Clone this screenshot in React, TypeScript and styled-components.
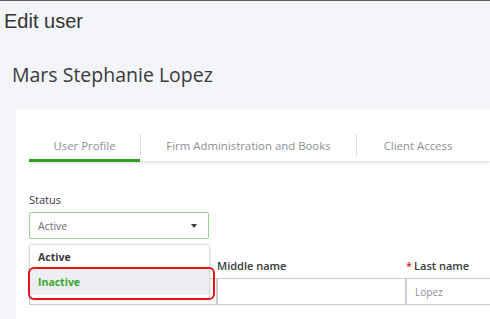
import React from 'react';
import styled, { createGlobalStyle } from 'styled-components';

const GlobalStyle = createGlobalStyle`
  html, body {
    margin: 0;
    padding: 0;
    background: #f4f5f8;
    overflow: hidden;
  }
  body {
    border-top: 1px solid #5a5a5a;
    font-family: "Open Sans", "Noto Sans", sans-serif;
    color: #393a3d;
  }
`;

const Page = styled.div`
  width: 490px;
  height: 318px;
  display: flex;
  flex-direction: column;
  overflow: hidden;
`;

const PageTitle = styled.h1`
  margin: 9px 0 0 4px;
  font-family: "Liberation Sans", Arial, sans-serif;
  font-size: 20px;
  line-height: 22px;
  font-weight: 400;
  color: #333;
`;

const UserName = styled.h2`
  margin: 30px 0 0 12px;
  font-size: 19.5px;
  line-height: 25px;
  font-weight: 400;
  color: #393a3d;
`;

const Card = styled.div`
  flex: 1;
  margin: 22px 0 0 16px;
  background: #fff;
  padding: 22px 0 0 13px;
  position: relative;
`;

const TabBar = styled.div`
  display: flex;
  height: 30px;
  box-shadow: 0 2px 2px -1px rgba(0, 0, 0, 0.12);
  border-bottom: 1px solid #e8e9ec;
`;

const Tab = styled.div<{ $w: number; $active?: boolean }>`
  width: ${(p) => p.$w}px;
  display: flex;
  align-items: center;
  justify-content: center;
  font-size: 11.4px;
  color: #8d9096;
  border-bottom: 3px solid ${(p) => (p.$active ? '#2ca01c' : 'transparent')};
  margin-bottom: -1px;
`;

const TabDivider = styled.div`
  width: 1px;
  margin: 3px 0 5px;
  background: #dcdde0;
`;

const Form = styled.div`
  padding-top: 31px;
  display: flex;
  flex-direction: column;
`;

const Label = styled.div<{ $bold?: boolean }>`
  font-size: 11px;
  line-height: 14px;
  height: 14px;
  font-weight: ${(p) => (p.$bold ? 600 : 500)};
  color: #393a3d;
  margin-bottom: 5px;
  white-space: nowrap;
`;

const Required = styled.span`
  color: #d52b1e;
  margin-right: 2px;
`;

const SelectWrap = styled.div`
  position: relative;
  width: 180px;
`;

const SelectBox = styled.div`
  height: 27px;
  box-sizing: border-box;
  border: 1.5px solid #94d68b;
  border-radius: 2px;
  display: flex;
  align-items: center;
  justify-content: space-between;
  padding: 0 11px 0 8px;
  font-size: 10.5px;
  color: #6b6c72;
`;

const Caret = styled.span`
  width: 0;
  height: 0;
  border-left: 3.5px solid transparent;
  border-right: 3.5px solid transparent;
  border-top: 4px solid #393a3d;
`;

const Menu = styled.div`
  position: absolute;
  top: 32px;
  left: 0;
  width: 179px;
  background: #fff;
  border: 1px solid #dcdde0;
  border-radius: 2px;
  box-shadow: 0 1px 3px rgba(0, 0, 0, 0.15);
  padding-bottom: 3px;
  z-index: 2;
`;

const MenuItem = styled.div<{ $selected?: boolean }>`
  height: ${(p) => (p.$selected ? 27 : 23)}px;
  display: flex;
  align-items: center;
  padding-left: 8px;
  font-size: 10.5px;
  font-weight: 700;
  color: ${(p) => (p.$selected ? '#3aa52c' : '#393a3d')};
  background: ${(p) => (p.$selected ? '#eceef1' : '#fff')};
  position: relative;
`;

const Highlight = styled.div`
  position: absolute;
  left: -2px;
  right: -6px;
  top: -1px;
  bottom: -5px;
  border: 2px solid #e8141c;
  border-radius: 6px;
`;

const FieldRow = styled.div`
  display: grid;
  grid-template-columns: 188px 189px 120px;
  margin-top: 20px;
`;

const Field = styled.div`
  display: flex;
  flex-direction: column;
`;

const Input = styled.div`
  height: 27px;
  box-sizing: border-box;
  border: 1px solid #c9cbd0;
  display: flex;
  align-items: center;
  padding-left: 8px;
  font-size: 10px;
  color: #8d9096;
`;

export default function App() {
  return (
    <Page>
      <GlobalStyle />
      <PageTitle>Edit user</PageTitle>
      <UserName>Mars Stephanie Lopez</UserName>
      <Card>
        <TabBar>
          <Tab $w={111} $active>User Profile</Tab>
          <TabDivider />
          <Tab $w={215}>Firm Administration and Books</Tab>
          <TabDivider />
          <Tab $w={122}>Client Access</Tab>
        </TabBar>
        <Form>
          <Label>Status</Label>
          <SelectWrap>
            <SelectBox>
              Active
              <Caret />
            </SelectBox>
            <Menu>
              <MenuItem>Active</MenuItem>
              <MenuItem $selected>
                Inactive
                <Highlight />
              </MenuItem>
            </Menu>
          </SelectWrap>
          <FieldRow>
            <Field>
              <Label $bold />
              <Input />
            </Field>
            <Field>
              <Label $bold>Middle name</Label>
              <Input />
            </Field>
            <Field>
              <Label $bold>
                <Required>*</Required>Last name
              </Label>
              <Input>Lopez</Input>
            </Field>
          </FieldRow>
        </Form>
      </Card>
    </Page>
  );
}
